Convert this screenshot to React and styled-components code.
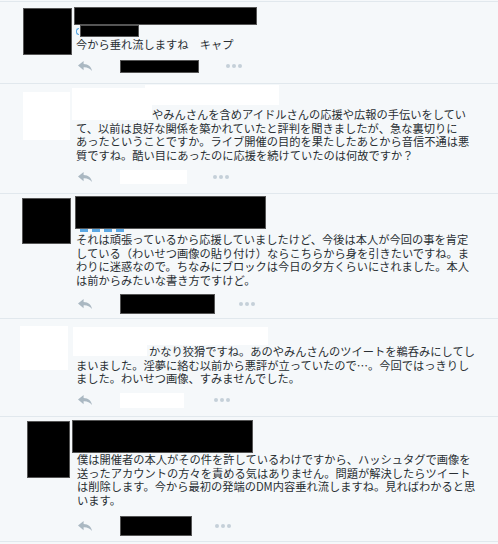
import React from "react";
import styled, { createGlobalStyle } from "styled-components";

const GlobalStyle = createGlobalStyle`
  html, body {
    margin: 0;
    padding: 0;
    background: #f5f8fa;
  }
  body {
    font-family: "Noto Sans CJK JP", "Noto Sans", sans-serif;
    color: #292f33;
  }
`;

const Stream = styled.ol`
  list-style: none;
  margin: 1px 0 0;
  padding: 0;
  width: 498px;
  border-top: 1px solid #e1e8ed;
`;

const Tweet = styled.li`
  display: flex;
  height: ${(p) => p.$h}px;
  box-sizing: border-box;
  border-bottom: 1px solid #e1e8ed;
`;

const AvatarCol = styled.div`
  flex: none;
  width: 74px;
`;

const Avatar = styled.div`
  box-sizing: border-box;
  width: ${(p) => p.$w}px;
  height: ${(p) => p.$h}px;
  margin: ${(p) => p.$y}px 0 0 ${(p) => p.$x}px;
  background: ${(p) => (p.$light ? "#fff" : "#000")};
  border: ${(p) => (p.$light ? "none" : "1px solid #555")};
`;

const Body = styled.div`
  flex: 1;
  padding-top: ${(p) => p.$top}px;
`;

/* redacted name block that sits in the header flow */
const NameBar = styled.div`
  box-sizing: border-box;
  width: ${(p) => p.$w}px;
  height: ${(p) => p.$h}px;
  margin-left: ${(p) => p.$x || 0}px;
  background: #000;
  border: 1px solid #555;
`;

const HandleRow = styled.div`
  display: flex;
  align-items: center;
  margin-left: 2px;
`;

const AtSliver = styled.span`
  width: 3px;
  height: 7px;
  border: 1.5px solid #5aa7e3;
  border-right: none;
  border-radius: 4px 0 0 4px;
  box-sizing: border-box;
`;

const HandleDashes = styled.div`
  width: 45px;
  height: 3px;
  margin-left: 6px;
  background: repeating-linear-gradient(
    90deg,
    #5aa7e3 0 8px,
    transparent 8px 12px
  );
`;

/* header whose white redaction lies over the name and part of the first line */
const CoveredHeader = styled.div`
  position: relative;
  height: ${(p) => p.$h}px;
`;

const Cover = styled.div`
  position: absolute;
  left: ${(p) => p.$x}px;
  top: ${(p) => p.$y}px;
  width: ${(p) => p.$w}px;
  height: ${(p) => p.$h}px;
  background: #fff;
`;

const Text = styled.p`
  margin: ${(p) => p.$mt || 0}px 0 0;
  padding-left: ${(p) => p.$pl || 2}px;
  font-size: 11.25px;
  line-height: 13.6px;
  white-space: nowrap;
  text-indent: ${(p) => p.$indent || 0}px;
`;

const Actions = styled.div`
  display: flex;
  align-items: center;
  margin-top: ${(p) => p.$mt}px;
  padding-left: 4px;
`;

const ReplyIcon = styled.svg`
  flex: none;
  width: 14px;
  height: 10px;
  fill: #aab8c2;
`;

const Stat = styled.div`
  box-sizing: border-box;
  width: ${(p) => p.$w}px;
  height: ${(p) => p.$h}px;
  margin-left: 28px;
  background: ${(p) => (p.$light ? "#fff" : "#000")};
  border: ${(p) => (p.$light ? "none" : "1px solid #555")};
`;

const More = styled.div`
  display: flex;
  gap: 2px;
  margin-left: ${(p) => p.$gap}px;
  span {
    width: 4px;
    height: 4px;
    border-radius: 50%;
    background: #c5d0d8;
  }
`;

function TweetText({ lines, ...rest }) {
  return (
    <Text {...rest}>
      {lines.map((line, i) => (
        <React.Fragment key={i}>
          {i > 0 && <br />}
          {line}
        </React.Fragment>
      ))}
    </Text>
  );
}

function ActionBar({ mt, w, h, light, gap }) {
  return (
    <Actions $mt={mt}>
      <ReplyIcon viewBox="0 0 14 10">
        <path d="M5.6 0 L0 4.6 L5.6 9.2 V6.3 C9.2 6.1 11.6 7.3 14 10 C13.3 5.6 10.6 3.1 5.6 2.9 Z" />
      </ReplyIcon>
      <Stat $w={w} $h={h} $light={light} />
      <More $gap={gap}>
        <span />
        <span />
        <span />
      </More>
    </Actions>
  );
}

export default function App() {
  return (
    <>
      <GlobalStyle />
      <Stream>
        <Tweet $h={82}>
          <AvatarCol>
            <Avatar $x={23} $y={6} $w={49} $h={47} />
          </AvatarCol>
          <Body $top={5}>
            <NameBar $w={183} $h={18} />
            <HandleRow>
              <AtSliver />
              <NameBar $w={59} $h={12} $x={1} />
            </HandleRow>
            <TweetText $mt={1} lines={["今から垂れ流しますね　キャプ"]} />
            <ActionBar mt={8} w={79} h={13} gap={27} />
          </Body>
        </Tweet>

        <Tweet $h={110}>
          <AvatarCol>
            <Avatar $light $x={23} $y={8} $w={47} $h={48} />
          </AvatarCol>
          <Body $top={1}>
            <CoveredHeader $h={20}>
              <Cover $x={-2} $y={3} $w={80} $h={32} />
              <Cover $x={71} $y={0} $w={134} $h={20} />
            </CoveredHeader>
            <TweetText
              $mt={3}
              $indent={76}
              lines={[
                "やみんさんを含めアイドルさんの応援や広報の手伝いをしてい",
                "て、以前は良好な関係を築かれていたと評判を聞きましたが、急な裏切りに",
                "あったということですか。ライブ開催の目的を果たしたあとから音信不通は悪",
                "質ですね。酷い目にあったのに応援を続けていたのは何故ですか？",
              ]}
            />
            <ActionBar mt={8} w={67} h={14} light gap={26} />
          </Body>
        </Tweet>

        <Tweet $h={125}>
          <AvatarCol>
            <Avatar $x={22} $y={4} $w={49} $h={46} />
          </AvatarCol>
          <Body $top={2}>
            <NameBar $w={191} $h={33} $x={1} />
            <HandleDashes />
            <TweetText
              $mt={1}
              lines={[
                "それは頑張っているから応援していましたけど、今後は本人が今回の事を肯定",
                "している（わいせつ画像の貼り付け）ならこちらから身を引きたいですね。ま",
                "わりに迷惑なので。ちなみにブロックは今日の夕方くらいにされました。本人",
                "は前からみたいな書き方ですけど。",
              ]}
            />
            <ActionBar mt={7} w={95} h={20} gap={24} />
          </Body>
        </Tweet>

        <Tweet $h={98}>
          <AvatarCol>
            <Avatar $light $x={20} $y={7} $w={48} $h={44} />
          </AvatarCol>
          <Body $top={8}>
            <CoveredHeader $h={18}>
              <Cover $x={-1} $y={0} $w={195} $h={18} />
              <Cover $x={-1} $y={0} $w={74} $h={29} />
            </CoveredHeader>
            <TweetText
              $indent={73}
              lines={[
                "かなり狡猾ですね。あのやみんさんのツイートを鵜呑みにしてし",
                "まいました。淫夢に絡む以前から悪評が立っていたので…。今回ではっきりし",
                "ました。わいせつ画像、すみませんでした。",
              ]}
            />
            <ActionBar mt={7} w={64} h={15} light gap={30} />
          </Body>
        </Tweet>

        <Tweet $h={125}>
          <AvatarCol>
            <Avatar $x={27} $y={4} $w={43} $h={57} />
          </AvatarCol>
          <Body $top={3}>
            <NameBar $w={181} $h={33} $x={-2} />
            <TweetText
              $pl={3}
              lines={[
                "僕は開催者の本人がその件を許しているわけですから、ハッシュタグで画像を",
                "送ったアカウントの方々を責める気はありません。問題が解決したらツイート",
                "は削除します。今から最初の発端のDM内容垂れ流しますね。見ればわかると思",
                "います。",
              ]}
            />
            <ActionBar mt={9} w={72} h={20} gap={23} />
          </Body>
        </Tweet>
      </Stream>
    </>
  );
}
